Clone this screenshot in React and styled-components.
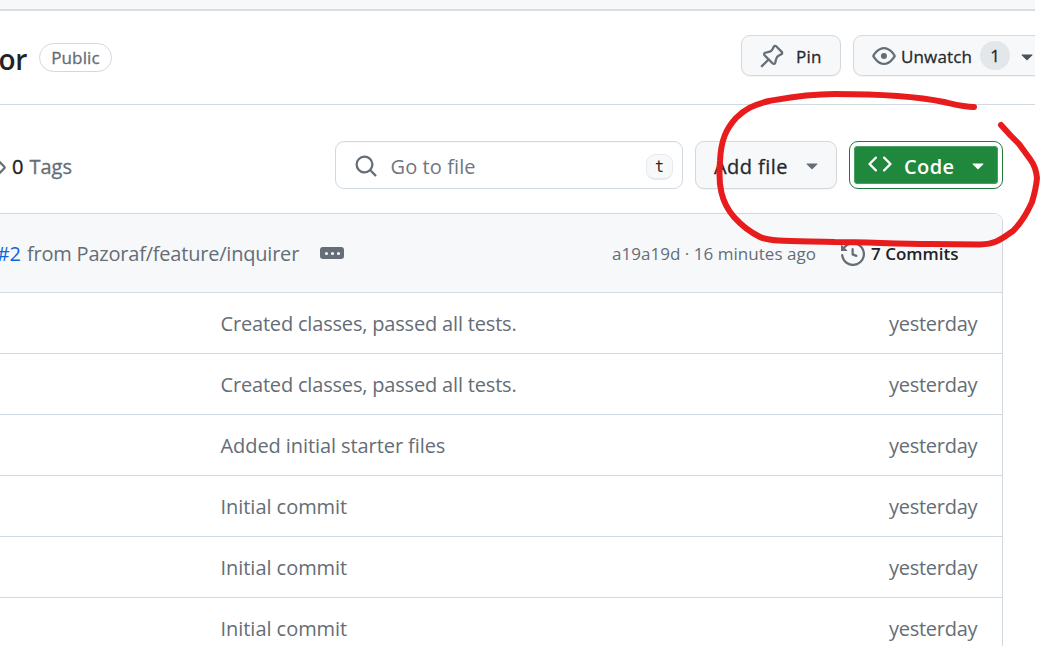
import React from "react";
import styled, { createGlobalStyle } from "styled-components";

const GlobalStyle = createGlobalStyle`
  * { box-sizing: border-box; }
  html, body { margin: 0; background: #fff; }
  body {
    width: 1042px; height: 646px; overflow: hidden;
    font-family: "Open Sans", "Noto Sans", sans-serif;
    font-size: 20px; color: #1f2328;
  }
`;

const Stage = styled.div`position: relative; width: 1042px; height: 646px; overflow: hidden;`;
const Page = styled.main`width: 1035px; height: 646px; overflow: hidden;`;
const TopStrip = styled.div`height: 11px; background: #f6f8fa; border-bottom: 2px solid #d8dee4;`;

const RepoHeader = styled.header`
  display: flex; align-items: flex-start; height: 94px; padding-top: 24px;
  border-bottom: 1px solid #d1d9e0;
`;
const RepoName = styled.h1`
  margin: 6px 12px 0 0; width: 27px; height: 36px; display: flex; justify-content: flex-end;
  font-size: 28px; line-height: 36px; font-weight: 600; letter-spacing: -0.3px;
`;
const Label = styled.span`
  width: 73px; height: 29px; margin-top: 8px; border: 1px solid #d1d9e0; border-radius: 15px;
  text-align: center; font-size: 17px; line-height: 27px; font-weight: 500; color: #656d76;
  letter-spacing: 0.15px; -webkit-text-stroke: 0.3px;
`;
const HeaderActions = styled.div`display: flex; gap: 12px; margin-left: auto; margin-right: -18px;`;

const Button = styled.button`
  display: flex; align-items: center; flex: none;
  width: ${(p) => p.$width}px; height: ${(p) => p.$height}px; padding: 0 0 0 ${(p) => p.$pad}px;
  margin-left: ${(p) => p.$gap || 0}px;
  border: 1px solid #d5d8db; border-radius: 9px; background: #f6f8fa;
  box-shadow: 0 1px 1px rgba(31, 35, 40, 0.05);
  font-family: inherit; font-size: ${(p) => p.$size}px; font-weight: 500; color: #25292e;
  -webkit-text-stroke: 0.3px;
`;
const PrimaryButton = styled(Button)`
  padding-left: 14px; border: 0; border-radius: 4px; background: #1f883d; color: #fff;
  box-shadow: inset 0 0 0 1px #4c9f64; font-weight: 600; -webkit-text-stroke: 0;
`;
const FocusRing = styled.div`
  flex: none; width: 154px; height: 48px; margin-left: 12px; padding: 4px; border: 1px solid #1f7a3a; border-radius: 9px;
`;
const Text = styled.span`
  flex: none; white-space: nowrap; width: ${(p) => (p.$width ? `${p.$width}px` : "auto")};
  text-align: left; letter-spacing: ${(p) => p.$spacing || 0}px; padding-top: ${(p) => p.$drop || 0}px;
`;
const Counter = styled.span`
  width: 30px; height: 29px; margin-left: 7px; margin-top: -1px; border-radius: 15px; background: #e4e7e9;
  text-align: center; font-size: 17px; line-height: 29px;
`;
const Svg = styled.svg`
  flex: none; display: block; fill: ${(p) => p.$color || "#656d76"};
  margin: ${(p) => p.$margin || 0};
`;

const Toolbar = styled.section`display: flex; height: 108px; padding-top: 36px;`;
const TagCount = styled.div`
  display: flex; align-items: center; width: 335px; height: 50px; margin-left: -18px;
`;
const Count = styled.span`-webkit-text-stroke: 0.4px;`;
const Muted = styled.span`color: #656d76; margin-left: 6px; -webkit-text-stroke: 0.3px;`;
const Search = styled.div`
  display: flex; align-items: center; width: 348px; height: 48px; margin-left: 18px; padding: 2px 9px 0 18px;
  border: 1px solid #d1d9e0; border-radius: 9px; color: #6e7781;
  box-shadow: inset 0 1px 1px rgba(31, 35, 40, 0.03);
`;
const Key = styled.kbd`
  width: 27px; height: 26px; margin: 2px 0 0 auto; border: 1px solid #e6eaef; border-bottom-width: 2px; border-radius: 9px;
  background: #f6f8fa; text-align: center; color: #1f2328;
  font: 15px/24px "DejaVu Sans Mono", monospace;
`;

const FileTable = styled.section`
  width: 1003px; height: 440px; border: solid #d1d9e0; border-width: 1px 1px 0 0; border-top-right-radius: 9px;
  color: #656d76; overflow: hidden;
`;
const LatestCommit = styled.div`
  display: flex; align-items: center; height: 79px; padding-top: 1px; background: #f6f8fa; border-bottom: 1px solid #d1d9e0;
`;
const Issue = styled.a`
  width: 21px; margin-right: 6px; display: flex; justify-content: flex-end; color: #1464dc;
`;
const Ellipsis = styled.span`
  display: flex; align-items: center; justify-content: center; gap: 3px;
  width: 24px; height: 12px; margin-left: 21px; margin-top: -1px; border-radius: 3px; background: #656d76;
`;
const Dot = styled.i`width: 3px; height: 3px; border-radius: 50%; background: #fff;`;
const CommitMeta = styled.div`
  display: flex; align-items: center; margin-left: auto; font-size: 17px;
`;
const Commits = styled.strong`font-size: 17px; font-weight: 600; color: #1f2328; width: 131px;`;
const FileRow = styled.div`
  display: flex; align-items: center; justify-content: space-between; height: 61px; padding: 0 0 0 220.5px;
  border-bottom: 1px solid #d1d9e0;
`;
const Marker = styled.svg`
  position: absolute; left: 0; top: 0; pointer-events: none; fill: none; stroke: #e81c1c;
  stroke-width: 6; stroke-linecap: round; stroke-linejoin: round;
`;

const PATHS = {
  eye: "M8 2c1.981 0 3.671.992 4.933 2.078 1.27 1.091 2.187 2.345 2.637 3.023a1.62 1.62 0 0 1 0 1.798c-.45.678-1.367 1.932-2.637 3.023C11.67 13.008 9.981 14 8 14c-1.981 0-3.671-.992-4.933-2.078C1.797 10.83.88 9.576.43 8.898a1.62 1.62 0 0 1 0-1.798c.45-.677 1.367-1.931 2.637-3.022C4.33 2.992 6.019 2 8 2ZM1.679 7.932a.12.12 0 0 0 0 .136c.411.622 1.241 1.75 2.366 2.717C5.176 11.758 6.527 12.5 8 12.5c1.473 0 2.825-.742 3.955-1.715 1.124-.967 1.954-2.096 2.366-2.717a.12.12 0 0 0 0-.136c-.412-.621-1.242-1.75-2.366-2.717C10.824 4.242 9.473 3.5 8 3.5c-1.473 0-2.825.742-3.955 1.715-1.124.967-1.954 2.096-2.366 2.717ZM8 10a2 2 0 1 1-.001-3.999A2 2 0 0 1 8 10Z",
  pin: "m11.294.984 3.722 3.722a1.75 1.75 0 0 1-.504 2.826l-1.327.613a3.089 3.089 0 0 0-1.707 2.084l-.584 2.454c-.317 1.332-1.972 1.8-2.94.832L5.75 11.311 1.78 15.28a.749.749 0 1 1-1.06-1.06l3.969-3.97-2.204-2.204c-.968-.968-.5-2.623.832-2.94l2.454-.584a3.08 3.08 0 0 0 2.084-1.707l.613-1.327a1.75 1.75 0 0 1 2.826-.504ZM6.283 9.723l2.732 2.731a.25.25 0 0 0 .42-.119l.584-2.454a4.586 4.586 0 0 1 2.537-3.098l1.328-.613a.25.25 0 0 0 .072-.404l-3.722-3.722a.25.25 0 0 0-.404.072l-.613 1.328a4.584 4.584 0 0 1-3.098 2.537l-2.454.584a.25.25 0 0 0-.119.42l2.731 2.732Z",
  search: "M10.68 11.74a6 6 0 0 1-7.922-8.982 6 6 0 0 1 8.982 7.922l3.04 3.04a.749.749 0 0 1-.326 1.275.749.749 0 0 1-.734-.215ZM11.5 7a4.499 4.499 0 1 0-8.997 0A4.499 4.499 0 0 0 11.5 7Z",
  code: "m11.28 3.22 4.25 4.25a.75.75 0 0 1 0 1.06l-4.25 4.25a.749.749 0 0 1-1.275-.326.749.749 0 0 1 .215-.734L13.94 8l-3.72-3.72a.749.749 0 0 1 .326-1.275.749.749 0 0 1 .734.215Zm-6.56 0a.751.751 0 0 1 1.042.018.751.751 0 0 1 .018 1.042L2.06 8l3.72 3.72a.749.749 0 0 1-.326 1.275.749.749 0 0 1-.734-.215L.47 8.53a.75.75 0 0 1 0-1.06Z",
  caret: "m4.427 7.427 3.396 3.396a.25.25 0 0 0 .354 0l3.396-3.396A.25.25 0 0 0 11.396 7H4.604a.25.25 0 0 0-.177.427Z",
  history: "m.427 1.927 1.215 1.215a8.002 8.002 0 1 1-1.6 5.685.75.75 0 1 1 1.493-.154 6.5 6.5 0 1 0 1.18-4.458l1.358 1.358A.25.25 0 0 1 3.896 6H.25A.25.25 0 0 1 0 5.75V2.104a.25.25 0 0 1 .427-.177ZM7.75 4a.75.75 0 0 1 .75.75v2.992l2.028.812a.75.75 0 0 1-.557 1.392l-2.5-1A.751.751 0 0 1 7 8.25v-3.5A.75.75 0 0 1 7.75 4Z",
  tag: "M1 7.775V2.75C1 1.784 1.784 1 2.75 1h5.025c.464 0 .91.184 1.238.513l6.25 6.25a1.75 1.75 0 0 1 0 2.474l-5.026 5.026a1.75 1.75 0 0 1-2.474 0l-6.25-6.25A1.752 1.752 0 0 1 1 7.775Zm1.5 0c0 .066.026.13.073.177l6.25 6.25a.25.25 0 0 0 .354 0l5.025-5.025a.25.25 0 0 0 0-.354l-6.25-6.25a.25.25 0 0 0-.177-.073H2.75a.25.25 0 0 0-.25.25ZM6 5a1 1 0 1 1 0 2 1 1 0 0 1 0-2Z",
};

const Icon = ({ name, size = 24, color, margin }) => (
  <Svg width={size} height={size} viewBox="0 0 16 16" $color={color} $margin={margin} aria-hidden="true">
    <path d={PATHS[name]} />
  </Svg>
);

const FILES = [
  ["Created classes, passed all tests.", -0.18],
  ["Created classes, passed all tests.", -0.18],
  ["Added initial starter files", -0.08],
  ["Initial commit", -0.04],
  ["Initial commit", -0.04],
  ["Initial commit", -0.04],
];

export default function App() {
  return (
    <Stage>
      <GlobalStyle />
      <Page>
        <TopStrip />
        <RepoHeader>
          <RepoName>or</RepoName>
          <Label>Public</Label>
          <HeaderActions>
            <Button $width={100} $height={41} $pad={18} $size={17}>
              <Icon name="pin" margin="0 12px 0 0" />
              <Text $width={27} $spacing={0.2} $drop={1}>Pin</Text>
            </Button>
            <Button $width={200} $height={41} $pad={18} $size={17}>
              <Icon name="eye" margin="0 5px 0 0" />
              <Text $width={72} $spacing={0.15} $drop={1}>Unwatch</Text>
              <Counter>1</Counter>
              <Icon name="caret" color="#4b5157" margin="1px 0 0 5px" />
            </Button>
          </HeaderActions>
        </RepoHeader>
        <Toolbar>
          <TagCount>
            <Icon name="tag" margin="0 6px 0 0" />
            <Count>0</Count>
            <Muted>Tags</Muted>
          </TagCount>
          <Search>
            <Icon name="search" margin="0 12.5px 0 0" />
            <Text $width={100} $spacing={0.1}>Go to file</Text>
            <Key>t</Key>
          </Search>
          <Button $gap={12} $width={142} $height={48} $pad={18} $size={20}>
            <Text $width={75} $spacing={0.45} $drop={2}>Add file</Text>
            <Icon name="caret" margin="0 0 0 11px" />
          </Button>
          <FocusRing>
            <PrimaryButton $width={144} $height={38} $size={20}>
              <Icon name="code" color="#fff" margin="-3px 12px 0 0" />
              <Text $width={50} $spacing={0.4} $drop={2}>Code</Text>
              <Icon name="caret" color="#fff" margin="0 0 0 12px" />
            </PrimaryButton>
          </FocusRing>
        </Toolbar>
        <FileTable>
          <LatestCommit>
            <Issue>#2</Issue>
            <Text $width={272} $spacing={-0.21}>from Pazoraf/feature/inquirer</Text>
            <Ellipsis><Dot /><Dot /><Dot /></Ellipsis>
            <CommitMeta>
              <Text $width={229} $spacing={0.03}>a19a19d · 16 minutes ago</Text>
              <Icon name="history" margin="0 6px 0 0" />
              <Commits>7 Commits</Commits>
            </CommitMeta>
          </LatestCommit>
          {FILES.map(([message, spacing], i) => (
            <FileRow key={i}>
              <Text $spacing={spacing}>{message}</Text>
              <Text $width={113} $spacing={-0.26}>yesterday</Text>
            </FileRow>
          ))}
        </FileTable>
      </Page>
      <Marker width="1042" height="646" viewBox="0 0 1042 646">
        <path d="M974 107 C964 107 957 105 944 102 C920 97 882 94 835 94 C805 94 786 98 769 101 C753 105 745 109 736 118 C726 129 721 140 720 161 C718 185 721 202 734 217 C742 226 752 233 760 237 C770 242 795 241 835 242 C868 242 895 244 930 244 L980 244.500 C996 244 1000 240 1013 231 C1022 222 1028 211 1032 202 Q1036 189 1037 178 Q1036 167 1030 159 L1019 144 L1011 136 L1001 125" />
      </Marker>
    </Stage>
  );
}
